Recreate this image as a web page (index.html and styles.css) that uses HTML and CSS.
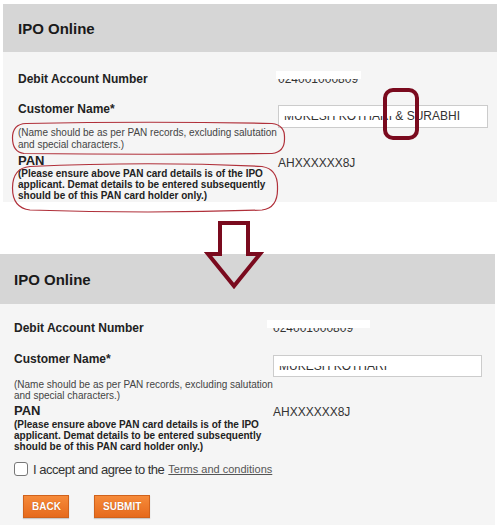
FILE: index.html
```html
<!DOCTYPE html>
<html lang="en">

<head>
  <meta charset="utf-8">
  <meta name="viewport" content="width=device-width, initial-scale=1">
  <title>IPO Online</title>
  <link rel="stylesheet" href="styles.css">
</head>

<body>
  <div class="page">

    <!-- before: name field with the joint holder -->
    <section class="ipo-panel before">
      <h2 class="panel-title">IPO Online</h2>
      <div class="panel-body">
        <div class="field-row row-debit">
          <div class="field-label">Debit Account Number</div>
          <div class="field-value"><span class="masked">024001000809</span></div>
        </div>
        <div class="field-row row-name">
          <div>
            <div class="field-label">Customer Name*</div>
            <p class="hint">(Name should be as per PAN records, excluding salutation<br>and special characters.)</p>
          </div>
          <div class="field-value">
            <div class="text-box"><span class="masked">MUKESH KOTHARI</span> &amp; SURABHI</div>
          </div>
        </div>
        <div class="field-row row-pan">
          <div>
            <div class="field-label pan-label">PAN</div>
            <p class="hint hint-strong">(Please ensure above PAN card details is of the IPO<br>applicant. Demat details to be entered subsequently<br>should be of this PAN card holder only.)</p>
          </div>
          <div class="field-value pan-value">AHXXXXXX8J</div>
        </div>
      </div>
    </section>

    <!-- after: single holder name -->
    <section class="ipo-panel after">
      <h2 class="panel-title">IPO Online</h2>
      <div class="panel-body">
        <div class="field-row row-debit">
          <div class="field-label">Debit Account Number</div>
          <div class="field-value"><span class="masked wide">024001000809</span></div>
        </div>
        <div class="field-row row-name">
          <div>
            <div class="field-label">Customer Name*</div>
            <p class="hint">(Name should be as per PAN records, excluding salutation<br>and special characters.)</p>
          </div>
          <div class="field-value">
            <div class="text-box"><span class="masked">MUKESH KOTHARI</span></div>
          </div>
        </div>
        <div class="field-row row-pan">
          <div>
            <div class="field-label pan-label">PAN</div>
            <p class="hint hint-strong">(Please ensure above PAN card details is of the IPO<br>applicant. Demat details to be entered subsequently<br>should be of this PAN card holder only.)</p>
          </div>
          <div class="field-value pan-value">AHXXXXXX8J</div>
        </div>

        <label class="agree">
          <input type="checkbox" class="agree-box">
          <span class="agree-text">I accept and agree to the</span>
          <a href="#" class="terms-link">Terms and conditions</a>
        </label>

        <div class="actions">
          <button class="btn-orange btn-back">BACK</button>
          <button class="btn-orange btn-submit">SUBMIT</button>
        </div>
      </div>
    </section>

    <!-- hand drawn marks on top of the screenshots -->
    <svg class="marks" width="500" height="525" viewBox="0 0 500 525">
      <rect class="mark-thick" x="385" y="90" width="32" height="48" rx="8" ry="8"></rect>
      <path class="mark-thin" d="M26 123.5 Q150 121 272 123.5 Q285 125 284.5 138 Q285 152 272 153.5 Q150 155 24 153.5 Q12.5 152 12.5 138 Q12.5 124 26 123.5 Z"></path>
      <path class="mark-thin" d="M30 166.5 Q150 161 262 166.5 Q278 169 277.5 188 Q278 208 262 210 Q150 214 30 210 Q12.5 208 12.5 188 Q12.5 168 30 166.5 Z"></path>
      <polygon class="mark-thick" points="220,223 248,223 248,254 260,254 234,286 208,254 220,254"></polygon>
    </svg>
  </div>
</body>

</html>
```

FILE: styles.css
```css
body {
  margin: 0;
  padding: 0;
  background: #fff;
  font-family: 'Liberation Sans', Arial, sans-serif;
  color: #222;
}

.page {
  position: relative;
  width: 500px;
  height: 525px;
  overflow: hidden;
}

.ipo-panel {
  background-color: #f5f5f5;
}

.ipo-panel.before {
  margin: 4px 3px 0 3px;
  height: 198px;
}

.ipo-panel.after {
  margin-top: 52px;
  width: 495px;
  height: 271px;
}

.panel-title {
  display: flex;
  align-items: center;
  margin: 0;
  height: 48px;
  padding-left: 15px;
  background-color: #d6d6d6;
  font-size: 15px;
  font-weight: bold;
  color: #1a1a1a;
}

.after .panel-title {
  height: 50px;
  padding-left: 14px;
}

.panel-body {
  padding: 20px 0 0 15px;
}

.after .panel-body {
  padding: 17px 0 0 14px;
}

.field-row {
  display: grid;
  grid-template-columns: 260px 210px;
}

.after .field-row {
  grid-template-columns: 259px 209px;
}

.field-label {
  font-size: 12px;
  line-height: 15px;
  font-weight: bold;
  color: #222;
}

.field-label.pan-label {
  font-size: 13px;
}

.field-value {
  font-size: 12px;
  line-height: 15px;
  color: #333;
}

.row-name {
  margin-top: 15px;
}

.after .row-name {
  margin-top: 16px;
}

.row-pan {
  margin-top: 2px;
}

.pan-value {
  margin-top: 3px;
}

.after .pan-value {
  margin-top: 2px;
}

.hint {
  margin: 10px 0 0 0;
  font-size: 10px;
  line-height: 12px;
  color: #444;
  white-space: nowrap;
}

.after .hint {
  margin-top: 12px;
  line-height: 11px;
}

.hint.hint-strong,
.after .hint.hint-strong {
  margin-top: 0;
  font-weight: bold;
  line-height: 11px;
  color: #222;
}

.after .hint.hint-strong {
  margin-top: 1px;
}

/* the screenshots had the top half of some values painted white */
.masked {
  position: relative;
  display: inline-block;
}

.masked::after {
  content: "";
  position: absolute;
  left: -2px;
  right: -3px;
  top: -1px;
  height: 8px;
  background: #fff;
}

.masked.wide::after {
  left: -6px;
  right: -17px;
}

.text-box {
  margin-top: 3px;
  height: 21px;
  padding-left: 5px;
  border: 1px solid #ccc;
  background: #fff;
  font-size: 12px;
  line-height: 21px;
  color: #333;
  white-space: nowrap;
}

.after .text-box {
  height: 20px;
  line-height: 20px;
}

.text-box .masked::after {
  top: 3px;
  height: 7px;
}

.agree {
  display: flex;
  align-items: center;
  margin-top: 9px;
  height: 16px;
}

.agree-box {
  appearance: none;
  -webkit-appearance: none;
  margin: 0;
  width: 14px;
  height: 14px;
  border: 1px solid #777;
  border-radius: 3px;
  background: #fff;
}

.agree-text {
  margin-left: 5px;
  font-size: 13px;
  letter-spacing: -0.5px;
  color: #333;
}

.terms-link {
  margin-left: 4px;
  font-size: 11px;
  color: #555;
  text-decoration: underline;
}

.actions {
  display: flex;
  gap: 25px;
  margin-top: 18px;
  padding-left: 9px;
}

.btn-orange {
  height: 23px;
  padding: 0 8px;
  border: 1px solid #d0621c;
  border-radius: 0;
  background: linear-gradient(#f68a3a, #e66a1c);
  color: #fff;
  font-family: 'Liberation Sans', Arial, sans-serif;
  font-size: 10px;
  font-weight: bold;
  text-shadow: 0 0 1px #b4500f;
  box-shadow: 0 1px 1px #c9c9c9;
}

.btn-back {
  width: 46px;
}

.btn-submit {
  width: 56px;
}

.marks {
  position: absolute;
  left: 0;
  top: 0;
  pointer-events: none;
}

.mark-thick {
  fill: none;
  stroke: #7a0a1e;
  stroke-width: 4;
}

.mark-thin {
  fill: none;
  stroke: #b0303a;
  stroke-width: 1.2;
}
```
